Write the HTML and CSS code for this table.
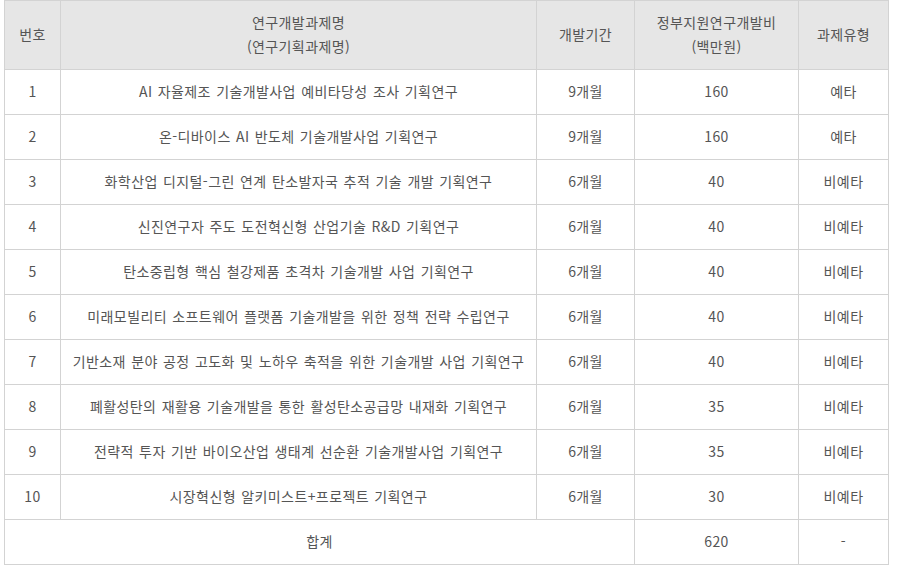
FILE: index.html
```html
<!DOCTYPE html>
<html lang="ko">
<head>
<meta charset="utf-8">
<link rel="stylesheet" href="styles.css">
</head>
<body>
<table class="tbl">
  <colgroup>
    <col class="c-no">
    <col class="c-name">
    <col class="c-period">
    <col class="c-cost">
    <col class="c-type">
  </colgroup>
  <thead>
    <tr class="head">
      <th>번호</th>
      <th>연구개발과제명<br>(연구기획과제명)</th>
      <th>개발기간</th>
      <th>정부지원연구개발비<br>(백만원)</th>
      <th>과제유형</th>
    </tr>
  </thead>
  <tbody>
    <tr><td>1</td><td>AI 자율제조 기술개발사업 예비타당성 조사 기획연구</td><td>9개월</td><td>160</td><td>예타</td></tr>
    <tr><td>2</td><td>온-디바이스 AI 반도체 기술개발사업 기획연구</td><td>9개월</td><td>160</td><td>예타</td></tr>
    <tr><td>3</td><td>화학산업 디지털-그린 연계 탄소발자국 추적 기술 개발 기획연구</td><td>6개월</td><td>40</td><td>비예타</td></tr>
    <tr><td>4</td><td>신진연구자 주도 도전혁신형 산업기술 R&amp;D 기획연구</td><td>6개월</td><td>40</td><td>비예타</td></tr>
    <tr><td>5</td><td>탄소중립형 핵심 철강제품 초격차 기술개발 사업 기획연구</td><td>6개월</td><td>40</td><td>비예타</td></tr>
    <tr><td>6</td><td>미래모빌리티 소프트웨어 플랫폼 기술개발을 위한 정책 전략 수립연구</td><td>6개월</td><td>40</td><td>비예타</td></tr>
    <tr><td>7</td><td>기반소재 분야 공정 고도화 및 노하우 축적을 위한 기술개발 사업 기획연구</td><td>6개월</td><td>40</td><td>비예타</td></tr>
    <tr><td>8</td><td>폐활성탄의 재활용 기술개발을 통한 활성탄소공급망 내재화 기획연구</td><td>6개월</td><td>35</td><td>비예타</td></tr>
    <tr><td>9</td><td>전략적 투자 기반 바이오산업 생태계 선순환 기술개발사업 기획연구</td><td>6개월</td><td>35</td><td>비예타</td></tr>
    <tr><td>10</td><td>시장혁신형 알키미스트+프로젝트 기획연구</td><td>6개월</td><td>30</td><td>비예타</td></tr>
    <tr class="total"><td colspan="3">합계</td><td>620</td><td>-</td></tr>
  </tbody>
</table>
</body>
</html>
```
FILE: styles.css
```css
html, body {
  margin: 0;
  padding: 0;
  background: #fff;
}
body {
  padding: 0 4px;
  font-family: "Noto Sans CJK KR", "Noto Sans", sans-serif;
  font-size: 14px;
  color: #555;
  letter-spacing: 0.4px;
  word-spacing: 1px;
}
.tbl {
  border-collapse: collapse;
  width: 884px;
  table-layout: fixed;
}
.c-no { width: 56px; }
.c-name { width: 476px; }
.c-period { width: 98px; }
.c-cost { width: 164px; }
.c-type { width: 90px; }
.tbl th, .tbl td {
  border: 1px solid #d3d3d3;
  text-align: center;
  vertical-align: middle;
  padding: 0 0 3px;
  line-height: 24px;
}
.tbl th {
  background: #e6e6e6;
  font-weight: normal;
}
.head { height: 69px; }
.tbl tbody tr { height: 45px; }
```
